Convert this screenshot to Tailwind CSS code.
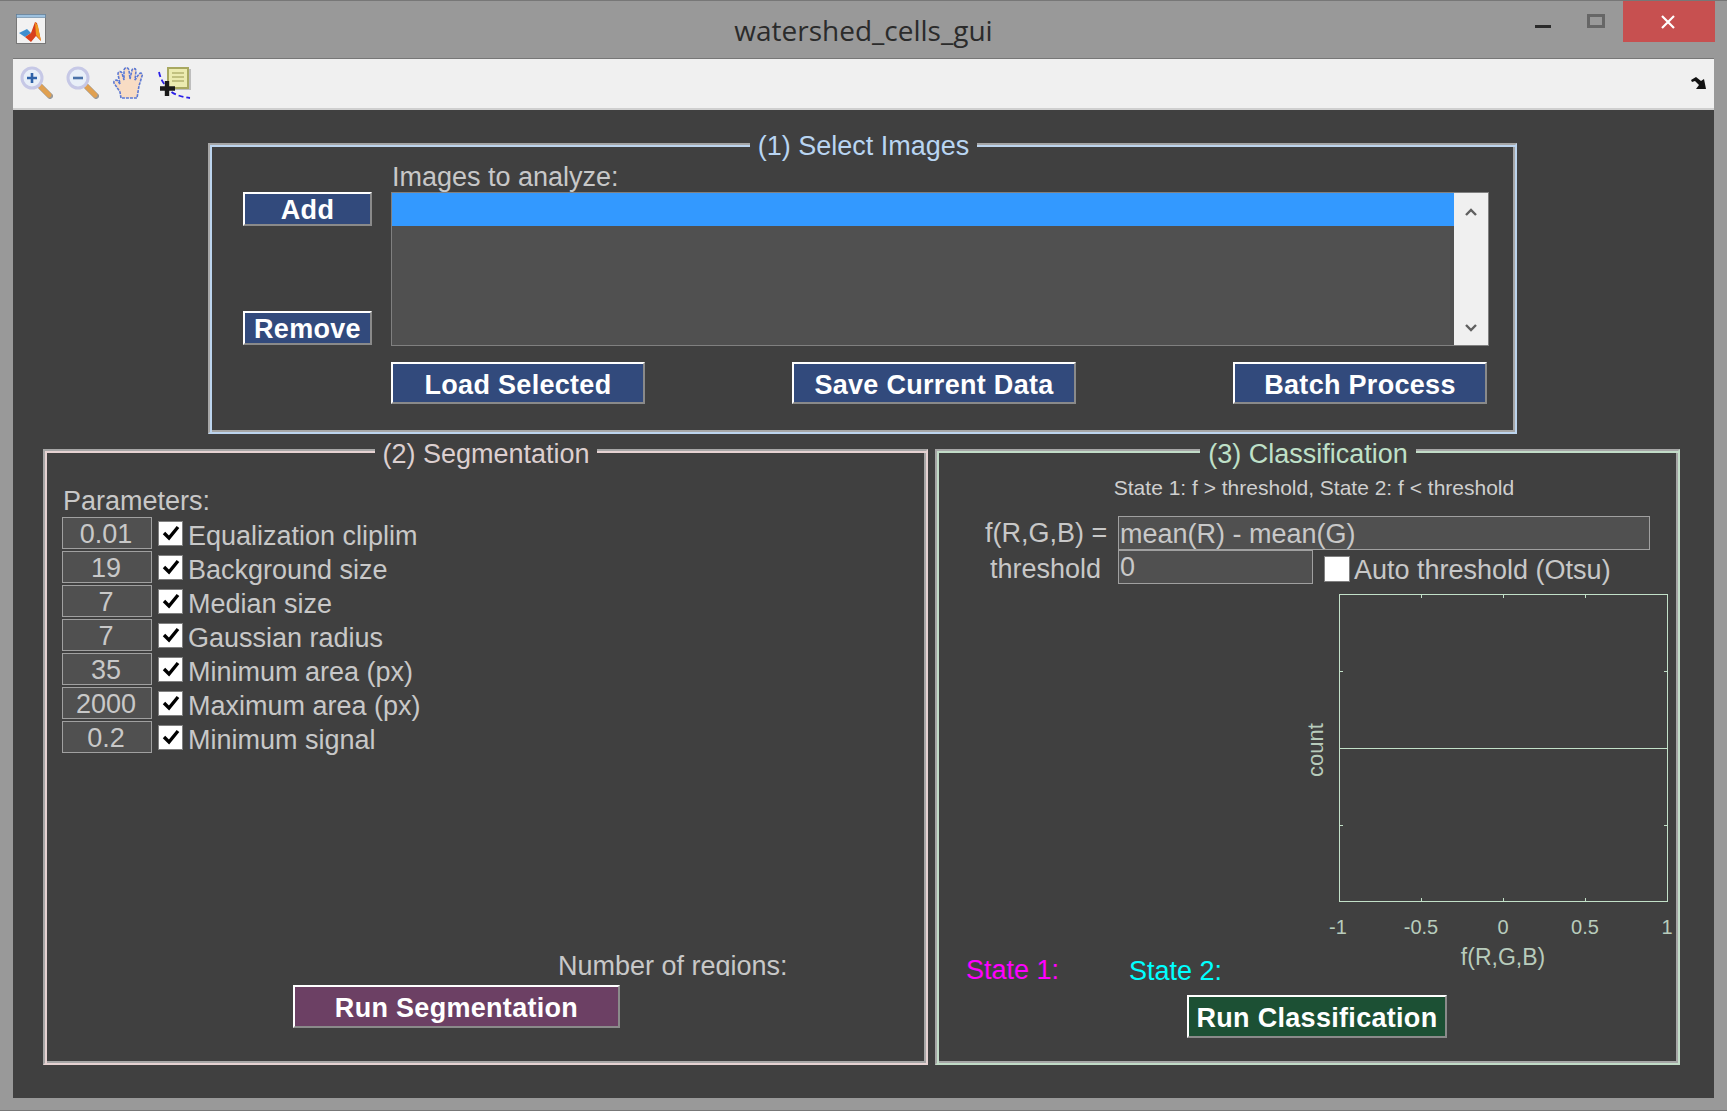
<!DOCTYPE html>
<html lang="en">
<head>
    <meta charset="UTF-8">
    <title>watershed_cells_gui</title>
    <script src="https://cdn.jsdelivr.net/npm/@tailwindcss/browser@4"></script>
</head>
<body class="bg-[#999999] w-[1727px] h-[1111px] overflow-hidden font-['Liberation_Sans',sans-serif] text-[27px] text-[#c8c8c8]">
    <div class="h-[58px] border-t border-[#777777] flex items-start relative">
        <svg class="ml-[16px] mt-[13px] w-[31px] h-[31px]" viewBox="0 0 31 31">
            <rect x="0.5" y="0.5" width="29" height="29" fill="#f2f2f2" stroke="#777777"/>
            <rect x="0.5" y="0.5" width="29" height="3" fill="#9cc0de" stroke="#5f7f9c" stroke-width="0.6"/>
            <path d="M3 19 L11 15 L15 19 L9 23z" fill="#3f8fd0"/>
            <path d="M9 23 L15 19 L19 8 L21 9 L25 27 L20 22 L15 28z" fill="#d8401c"/>
            <path d="M19 8 L22 12 L25 27 L20 21z" fill="#f09a20"/>
        </svg>
        <div class="absolute left-0 right-0 top-[12px] text-center font-['Open_Sans',sans-serif] text-[28px] leading-[34px] text-[#2b2b2b]">watershed_cells_gui</div>
        <div class="ml-auto flex items-start">
            <div class="w-[16px] h-[3px] bg-[#2b2b2b] mt-[24px] mr-[36px]"></div>
            <div class="w-[18px] h-[14px] border-[3px] border-[#666666] mt-[13px] mr-[18px]"></div>
            <div class="w-[92px] h-[41px] bg-[#c75050] flex items-center justify-center pr-[2px]">
                <svg class="w-[14px] h-[14px]" viewBox="0 0 14 14"><path d="M1 1 L13 13 M13 1 L1 13" stroke="#ffffff" stroke-width="2.2"/></svg>
            </div>
            <div class="w-[12px]"></div>
        </div>
    </div>

    <div class="mx-[13px] h-[52px] bg-[#f0f0f0] border-t border-[#777777] border-b-2 border-b-[#cfcfcf] flex items-start pl-[7px] pr-[7px]">
        <svg class="mt-[7px] w-[33px] h-[33px]" viewBox="0 0 33 33">
            <path d="M21 21 L30 30" stroke="#9a9a9a" stroke-width="6" stroke-linecap="round"/>
            <path d="M20 20 L29 29" stroke="#e0a050" stroke-width="5" stroke-linecap="round"/>
            <circle cx="12" cy="12" r="10" fill="#e8eff8" stroke="#c6c8e6" stroke-width="3"/>
            <path d="M7 12 H17 M12 7 V17" stroke="#2f62a8" stroke-width="2.6"/>
        </svg>
        <svg class="ml-[13px] mt-[7px] w-[33px] h-[33px]" viewBox="0 0 33 33">
            <path d="M21 21 L30 30" stroke="#9a9a9a" stroke-width="6" stroke-linecap="round"/>
            <path d="M20 20 L29 29" stroke="#e0a050" stroke-width="5" stroke-linecap="round"/>
            <circle cx="12" cy="12" r="10" fill="#e8eff8" stroke="#c6c8e6" stroke-width="3"/>
            <path d="M7 12 H17" stroke="#4a72a8" stroke-width="2.6"/>
        </svg>
        <svg class="ml-[13px] mt-[7px] w-[33px] h-[33px]" viewBox="0 0 33 33">
            <path d="M9 32 L8 26 L2 17 C1 15 4 13 6 15 L8 18 L6 8 C6 5 9 5 10 7 L12 14 L12 4 C13 1 16 1 17 4 L18 13 L20 4 C21 2 24 2 24 5 L23 14 L27 8 C29 6 31 8 30 10 L27 20 L25 32z" fill="#f8dcc4" stroke="#5a78d4" stroke-width="1.6" stroke-dasharray="3 1"/>
        </svg>
        <svg class="ml-[13px] mt-[7px] w-[33px] h-[33px]" viewBox="0 0 33 33">
            <rect x="12" y="3" width="21" height="21" fill="#8c8c8c" opacity="0.5"/>
            <rect x="10" y="2" width="20" height="20" fill="#ecebb0" stroke="#a8a860" stroke-width="2"/>
            <path d="M14 7 H26 M14 11 H26 M14 15 H26" stroke="#b4b470" stroke-width="1.6"/>
            <path d="M1 6 Q3 15 8 20 Q14 30 32 32" fill="none" stroke="#2a1fe8" stroke-width="1.8" stroke-dasharray="5 3"/>
            <path d="M9 15 V30 M2 22.5 H17" stroke="#1a1a1a" stroke-width="4.4"/>
        </svg>
        <svg class="ml-auto mt-[18px] w-[16px] h-[13px]" viewBox="0 0 16 13">
            <path d="M0 3 L5 0 L10 4 L13 2 L15 12 L5 12 L8 8 L4 4 L1 5z" fill="#111111"/>
        </svg>
    </div>

    <div class="mx-[13px] h-[988px] bg-[#404040] pt-[33px]">
        <!-- (1) Select Images -->
        <div class="relative ml-[195px] w-[1309px] h-[291px] border-2 border-t-[#a6a6a6] border-l-[#a6a6a6] border-r-[#bcd4ee] border-b-[#bcd4ee] shadow-[inset_2px_2px_0_#bcd4ee,inset_-2px_-2px_0_#a6a6a6] pl-[33px] pt-[19px]">
            <div class="absolute left-[540px] top-[-15px] w-[227px] h-[32px] leading-[32px] bg-[#404040] text-center text-[#b9d5f2]">(1) Select Images</div>
            <div class="grid grid-cols-[129px_1098px] gap-x-[19px] grid-rows-[28px_154px_42px]">
                <div></div>
                <div class="leading-[26px] pl-[1px]">Images to analyze:</div>
                <div class="flex flex-col justify-between h-[153px]">
                    <div class="h-[34px] bg-[#324a7c] border-2 border-t-white border-l-white border-r-[#8a8a8a] border-b-[#8a8a8a] font-bold text-white text-center leading-[33px] tracking-[0.3px]">Add</div>
                    <div class="h-[34px] bg-[#324a7c] border-2 border-t-white border-l-white border-r-[#8a8a8a] border-b-[#8a8a8a] font-bold text-white text-center leading-[33px] tracking-[0.3px]">Remove</div>
                </div>
                <div class="h-[154px] bg-[#505050] border border-[#808080] flex">
                    <div class="flex-1"><div class="h-[33px] bg-[#3399ff]"></div></div>
                    <div class="w-[34px] bg-[#f0f0f0] flex flex-col justify-between items-center pt-[15px] pb-[13px]">
                        <svg class="w-[12px] h-[8px]" viewBox="0 0 12 8"><path d="M1 7 L6 2 L11 7" fill="none" stroke="#606060" stroke-width="2.4"/></svg>
                        <svg class="w-[12px] h-[8px]" viewBox="0 0 12 8"><path d="M1 1 L6 6 L11 1" fill="none" stroke="#606060" stroke-width="2.4"/></svg>
                    </div>
                </div>
                <div></div>
                <div class="flex mt-[16px]">
                    <div class="w-[254px] h-[42px] bg-[#324a7c] border-2 border-t-white border-l-white border-r-[#8a8a8a] border-b-[#8a8a8a] font-bold text-white text-center leading-[43px] tracking-[0.3px]">Load Selected</div>
                    <div class="ml-[147px] w-[284px] h-[42px] bg-[#324a7c] border-2 border-t-white border-l-white border-r-[#8a8a8a] border-b-[#8a8a8a] font-bold text-white text-center leading-[43px] tracking-[0.3px]">Save Current Data</div>
                    <div class="ml-[157px] w-[254px] h-[42px] bg-[#324a7c] border-2 border-t-white border-l-white border-r-[#8a8a8a] border-b-[#8a8a8a] font-bold text-white text-center leading-[43px] tracking-[0.3px]">Batch Process</div>
                </div>
            </div>
        </div>

        <div class="flex ml-[30px] mt-[15px] gap-[7px]">
            <!-- (2) Segmentation -->
            <div class="relative w-[885px] h-[616px] border-2 border-t-[#a6a6a6] border-l-[#a6a6a6] border-r-[#e6d2d2] border-b-[#e6d2d2] shadow-[inset_2px_2px_0_#e6d2d2,inset_-2px_-2px_0_#a6a6a6] pl-[17px] pt-[33px]">
                <div class="absolute left-[330px] top-[-13px] w-[222px] h-[32px] leading-[32px] bg-[#404040] text-center text-[#dccfcf]">(2) Segmentation</div>
                <div class="h-[32px] leading-[34px] pl-[1px]">Parameters:</div>
                <div class="flex items-center h-[34px]">
                    <div class="w-[90px] h-[32px] bg-[#505050] border border-[#a0a0a0] text-center leading-[32px] pr-[2px]">0.01</div>
                    <div class="ml-[6px] w-[25px] h-[25px] bg-white border border-[#808080] flex items-center justify-center"><svg class="w-[18px] h-[16px]" viewBox="0 0 18 16"><path d="M2 8 L7 13 L16 2" fill="none" stroke="#000000" stroke-width="3.4"/></svg></div>
                    <div class="ml-[5px] leading-[34px] mt-[6px]">Equalization cliplim</div>
                </div>
                <div class="flex items-center h-[34px]">
                    <div class="w-[90px] h-[32px] bg-[#505050] border border-[#a0a0a0] text-center leading-[32px] pr-[2px]">19</div>
                    <div class="ml-[6px] w-[25px] h-[25px] bg-white border border-[#808080] flex items-center justify-center"><svg class="w-[18px] h-[16px]" viewBox="0 0 18 16"><path d="M2 8 L7 13 L16 2" fill="none" stroke="#000000" stroke-width="3.4"/></svg></div>
                    <div class="ml-[5px] leading-[34px] mt-[6px]">Background size</div>
                </div>
                <div class="flex items-center h-[34px]">
                    <div class="w-[90px] h-[32px] bg-[#505050] border border-[#a0a0a0] text-center leading-[32px] pr-[2px]">7</div>
                    <div class="ml-[6px] w-[25px] h-[25px] bg-white border border-[#808080] flex items-center justify-center"><svg class="w-[18px] h-[16px]" viewBox="0 0 18 16"><path d="M2 8 L7 13 L16 2" fill="none" stroke="#000000" stroke-width="3.4"/></svg></div>
                    <div class="ml-[5px] leading-[34px] mt-[6px]">Median size</div>
                </div>
                <div class="flex items-center h-[34px]">
                    <div class="w-[90px] h-[32px] bg-[#505050] border border-[#a0a0a0] text-center leading-[32px] pr-[2px]">7</div>
                    <div class="ml-[6px] w-[25px] h-[25px] bg-white border border-[#808080] flex items-center justify-center"><svg class="w-[18px] h-[16px]" viewBox="0 0 18 16"><path d="M2 8 L7 13 L16 2" fill="none" stroke="#000000" stroke-width="3.4"/></svg></div>
                    <div class="ml-[5px] leading-[34px] mt-[6px]">Gaussian radius</div>
                </div>
                <div class="flex items-center h-[34px]">
                    <div class="w-[90px] h-[32px] bg-[#505050] border border-[#a0a0a0] text-center leading-[32px] pr-[2px]">35</div>
                    <div class="ml-[6px] w-[25px] h-[25px] bg-white border border-[#808080] flex items-center justify-center"><svg class="w-[18px] h-[16px]" viewBox="0 0 18 16"><path d="M2 8 L7 13 L16 2" fill="none" stroke="#000000" stroke-width="3.4"/></svg></div>
                    <div class="ml-[5px] leading-[34px] mt-[6px]">Minimum area (px)</div>
                </div>
                <div class="flex items-center h-[34px]">
                    <div class="w-[90px] h-[32px] bg-[#505050] border border-[#a0a0a0] text-center leading-[32px] pr-[2px]">2000</div>
                    <div class="ml-[6px] w-[25px] h-[25px] bg-white border border-[#808080] flex items-center justify-center"><svg class="w-[18px] h-[16px]" viewBox="0 0 18 16"><path d="M2 8 L7 13 L16 2" fill="none" stroke="#000000" stroke-width="3.4"/></svg></div>
                    <div class="ml-[5px] leading-[34px] mt-[6px]">Maximum area (px)</div>
                </div>
                <div class="flex items-center h-[34px]">
                    <div class="w-[90px] h-[32px] bg-[#505050] border border-[#a0a0a0] text-center leading-[32px] pr-[2px]">0.2</div>
                    <div class="ml-[6px] w-[25px] h-[25px] bg-white border border-[#808080] flex items-center justify-center"><svg class="w-[18px] h-[16px]" viewBox="0 0 18 16"><path d="M2 8 L7 13 L16 2" fill="none" stroke="#000000" stroke-width="3.4"/></svg></div>
                    <div class="ml-[5px] leading-[34px] mt-[6px]">Minimum signal</div>
                </div>
                <div class="mt-[197px] ml-[496px] h-[25px] overflow-hidden leading-[30px] whitespace-nowrap">Number of regions:</div>
                <div class="mt-[9px] ml-[231px] w-[327px] h-[43px] bg-[#6c4064] border-2 border-t-white border-l-white border-r-[#8a8a8a] border-b-[#8a8a8a] font-bold text-white text-center leading-[43px] tracking-[0.3px]">Run Segmentation</div>
            </div>

            <!-- (3) Classification -->
            <div class="relative w-[745px] h-[616px] border-2 border-t-[#a6a6a6] border-l-[#a6a6a6] border-r-[#c2dcc8] border-b-[#c2dcc8] shadow-[inset_2px_2px_0_#c2dcc8,inset_-2px_-2px_0_#a6a6a6] pt-[24px]">
                <div class="absolute left-[263px] top-[-13px] w-[216px] h-[32px] leading-[32px] bg-[#404040] text-center text-[#bfe0c8]">(3) Classification</div>
                <div class="h-[26px] leading-[26px] text-[21px] text-center text-[#cfcfcf] ml-[176px] w-[402px] whitespace-nowrap">State 1: f &gt; threshold, State 2: f &lt; threshold</div>
                <div class="flex h-[34px] mt-[15px]">
                    <div class="w-[181px] pl-[48px] leading-[34px] whitespace-nowrap">f(R,G,B) =</div>
                    <div class="w-[532px] h-[34px] bg-[#505050] border border-[#a0a0a0] pl-[1px] leading-[34px]">mean(R) - mean(G)</div>
                </div>
                <div class="flex h-[34px]">
                    <div class="w-[181px] pl-[53px] leading-[38px] whitespace-nowrap">threshold</div>
                    <div class="w-[195px] h-[34px] bg-[#505050] border border-[#a0a0a0] pl-[1px] leading-[32px]">0</div>
                    <div class="ml-[11px] mt-[6px] w-[26px] h-[26px] bg-white border border-[#808080]"></div>
                    <div class="ml-[4px] leading-[40px] whitespace-nowrap">Auto threshold (Otsu)</div>
                </div>
                <!-- axes -->
                <div class="relative mt-[10px] ml-[402px] w-[329px] h-[308px] border border-[#c2e0c8] text-[20px] text-[#b8ccbc]">
                    <div class="absolute left-0 right-0 top-[153px] h-px bg-[#c2e0c8]"></div>
                    <div class="absolute left-[81px] top-0 h-[3px] w-px bg-[#c2e0c8]"></div>
                    <div class="absolute left-[163px] top-0 h-[3px] w-px bg-[#c2e0c8]"></div>
                    <div class="absolute left-[245px] top-0 h-[3px] w-px bg-[#c2e0c8]"></div>
                    <div class="absolute left-[81px] bottom-0 h-[3px] w-px bg-[#c2e0c8]"></div>
                    <div class="absolute left-[163px] bottom-0 h-[3px] w-px bg-[#c2e0c8]"></div>
                    <div class="absolute left-[245px] bottom-0 h-[3px] w-px bg-[#c2e0c8]"></div>
                    <div class="absolute left-0 top-[76px] w-[3px] h-px bg-[#c2e0c8]"></div>
                    <div class="absolute left-0 top-[230px] w-[3px] h-px bg-[#c2e0c8]"></div>
                    <div class="absolute right-0 top-[76px] w-[3px] h-px bg-[#c2e0c8]"></div>
                    <div class="absolute right-0 top-[230px] w-[3px] h-px bg-[#c2e0c8]"></div>
                    <div class="absolute left-[-2px] top-[320px] -translate-x-1/2 leading-[24px]">-1</div>
                    <div class="absolute left-[81px] top-[320px] -translate-x-1/2 leading-[24px]">-0.5</div>
                    <div class="absolute left-[163px] top-[320px] -translate-x-1/2 leading-[24px]">0</div>
                    <div class="absolute left-[245px] top-[320px] -translate-x-1/2 leading-[24px]">0.5</div>
                    <div class="absolute left-[327px] top-[320px] -translate-x-1/2 leading-[24px]">1</div>
                    <div class="absolute left-[163px] top-[350px] -translate-x-1/2 leading-[24px] whitespace-nowrap text-[23px]">f(R,G,B)</div>
                    <div class="absolute left-[-24px] top-[155px] -translate-x-1/2 -translate-y-1/2 -rotate-90 leading-[24px] text-[22px]">count</div>
                </div>
                <div class="flex mt-[54px] h-[32px]">
                    <div class="ml-[29px] w-[163px] leading-[28px] text-[#ff00ff]">State 1:</div>
                    <div class="leading-[30px] text-[#00ffff]">State 2:</div>
                </div>
                <div class="mt-[7px] ml-[250px] w-[260px] h-[43px] bg-[#1c5034] border-2 border-t-white border-l-white border-r-[#8a8a8a] border-b-[#8a8a8a] font-bold text-white text-center leading-[43px] whitespace-nowrap tracking-[0.3px]">Run Classification</div>
            </div>
        </div>
    </div>
    <div class="h-[13px] border-b border-[#777777]"></div>
</body>
</html>
